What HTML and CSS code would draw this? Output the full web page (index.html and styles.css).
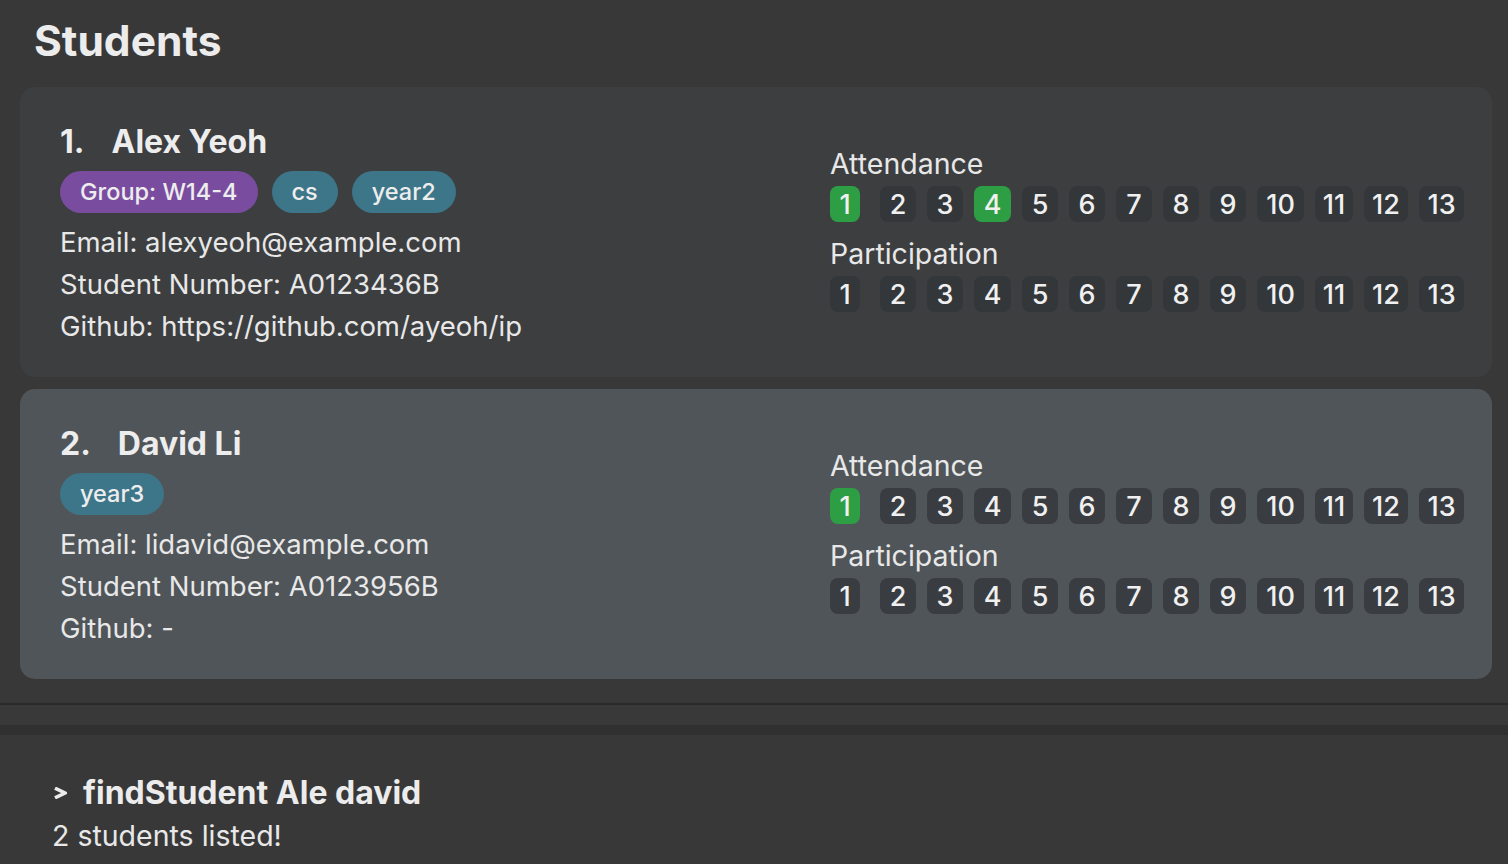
FILE: index.html
```html
<!DOCTYPE html>
<html lang="en">
<head>
<meta charset="utf-8">
<title>Students</title>
<link rel="stylesheet" href="styles.css">
</head>
<body>
<div class="app">
  <div class="list-pane">
    <h1 class="title">Students</h1>
    <div class="cards">
      <div class="card">
        <div class="info">
          <div class="name"><span class="idx">1.</span><span>Alex Yeoh</span></div>
          <div class="tags">
            <span class="tag tag-group">Group: W14-4</span>
            <span class="tag tag-teal">cs</span>
            <span class="tag tag-teal">year2</span>
          </div>
          <div class="field">Email: alexyeoh@example.com</div>
          <div class="field">Student Number: A0123436B</div>
          <div class="field">Github: https://github.com/ayeoh/ip</div>
        </div>
        <div class="tracker">
          <div class="t-label">Attendance</div>
          <div class="chips">
            <span class="chip w1 first on">1</span><span class="chip">2</span><span class="chip">3</span><span class="chip w4 on">4</span><span class="chip">5</span><span class="chip">6</span><span class="chip">7</span><span class="chip">8</span><span class="chip">9</span><span class="chip w10">10</span><span class="chip w11">11</span><span class="chip w12">12</span><span class="chip w13">13</span>
          </div>
          <div class="t-label second">Participation</div>
          <div class="chips">
            <span class="chip w1 first">1</span><span class="chip">2</span><span class="chip">3</span><span class="chip w4">4</span><span class="chip">5</span><span class="chip">6</span><span class="chip">7</span><span class="chip">8</span><span class="chip">9</span><span class="chip w10">10</span><span class="chip w11">11</span><span class="chip w12">12</span><span class="chip w13">13</span>
          </div>
        </div>
      </div>
      <div class="card selected">
        <div class="info">
          <div class="name"><span class="idx">2.</span><span>David Li</span></div>
          <div class="tags">
            <span class="tag tag-teal">year3</span>
          </div>
          <div class="field">Email: lidavid@example.com</div>
          <div class="field">Student Number: A0123956B</div>
          <div class="field">Github: -</div>
        </div>
        <div class="tracker">
          <div class="t-label">Attendance</div>
          <div class="chips">
            <span class="chip w1 first on">1</span><span class="chip">2</span><span class="chip">3</span><span class="chip w4">4</span><span class="chip">5</span><span class="chip">6</span><span class="chip">7</span><span class="chip">8</span><span class="chip">9</span><span class="chip w10">10</span><span class="chip w11">11</span><span class="chip w12">12</span><span class="chip w13">13</span>
          </div>
          <div class="t-label second">Participation</div>
          <div class="chips">
            <span class="chip w1 first">1</span><span class="chip">2</span><span class="chip">3</span><span class="chip w4">4</span><span class="chip">5</span><span class="chip">6</span><span class="chip">7</span><span class="chip">8</span><span class="chip">9</span><span class="chip w10">10</span><span class="chip w11">11</span><span class="chip w12">12</span><span class="chip w13">13</span>
          </div>
        </div>
      </div>
    </div>
  </div>
  <div class="divider"></div>
  <div class="band"></div>
  <div class="band-dark"></div>
  <div class="console">
    <div class="cmd-line">
      <svg class="prompt" width="14" height="12" viewBox="0 0 14 12" aria-hidden="true"><polyline points="2,1.2 12,6 2,10.8" fill="none" stroke="#ececec" stroke-width="3.6" stroke-linejoin="miter" stroke-linecap="butt"/></svg>
      <span class="cmd">findStudent Ale david</span>
    </div>
    <div class="result">2 students listed!</div>
  </div>
</div>
</body>
</html>
```
FILE: styles.css
```css
* { box-sizing: border-box; }
html, body {
  margin: 0;
  padding: 0;
  background: #383838;
  height: 864px;
  overflow: hidden;
}
body {
  font-family: "Inter", "DejaVu Sans", sans-serif;
  color: #ececec;
}
.app {
  display: flex;
  flex-direction: column;
  width: 1508px;
  height: 864px;
}
.list-pane {
  height: 703px;
  padding: 16px 16px 0 20px;
}
.title {
  margin: 0 0 21px 14px;
  height: 50px;
  line-height: 50px;
  font-size: 42.5px;
  font-weight: 700;
  color: #ececec;
}
.cards {
  display: flex;
  flex-direction: column;
  gap: 12px;
}
.card {
  height: 290px;
  border-radius: 15px;
  background: #3d3e40;
  display: grid;
  grid-template-columns: 770px 1fr;
  align-items: start;
  padding: 0 30px 0 40px;
}
.card.selected { background: #505559; }
.info { padding-top: 36px; }
.name {
  font-size: 32px;
  font-weight: 700;
  line-height: 38px;
  height: 38px;
  display: flex;
  color: #ededed;
}
.idx { margin-right: 27px; }
.tags {
  display: flex;
  gap: 14px;
  margin-top: 10px;
  margin-bottom: 8px;
}
.tag {
  height: 42px;
  line-height: 42px;
  padding: 0 20px;
  border-radius: 21px;
  font-size: 23.5px;
  font-weight: 500;
  color: #ededed;
}
.tag-group { background: #7a4ca0; }
.tag-teal { background: #3d7589; }
.field {
  font-size: 27.5px;
  line-height: 42px;
  height: 42px;
  color: #e8e8e8;
  white-space: nowrap;
}
.tracker { padding-top: 61px; }
.t-label {
  font-size: 28.5px;
  line-height: 32px;
  height: 32px;
  margin-bottom: 6px;
  color: #e8e8e8;
}
.t-label.second { margin-top: 16px; }
.chips {
  display: flex;
  gap: 11px;
}
.chip {
  width: 36px;
  height: 36px;
  border-radius: 8px;
  background: #33373a;
  display: flex;
  align-items: center;
  justify-content: center;
  font-size: 27px;
  font-weight: 500;
  color: #f0f0f0;
}
.selected .chip { background: #393d41; }
.chip.on, .selected .chip.on { background: #2e9e44; }
.chip.w1 { width: 30px; }
.chip.first { margin-right: 9px; }
.chip.w4 { width: 37px; }
.chip.w10 { width: 47px; }
.chip.w11 { width: 38px; }
.chip.w12 { width: 44px; }
.chip.w13 { width: 45px; }
.divider { height: 2px; background: #2a2a2a; }
.band { height: 20px; background: #393939; }
.band-dark { height: 10px; background: #303030; }
.console {
  flex: 1;
  margin-left: 2px;
  border-radius: 15px 15px 0 0;
  background: #383838;
  padding: 38px 0 0 50px;
}
.cmd-line {
  display: flex;
  align-items: center;
  height: 40px;
}
.prompt { margin: 0 16px 0 1px; flex: none; }
.cmd {
  font-size: 32px;
  font-weight: 700;
  line-height: 40px;
  color: #ececec;
}
.result {
  margin-top: 6px;
  font-size: 28.5px;
  line-height: 34px;
  color: #e8e8e8;
}
```
